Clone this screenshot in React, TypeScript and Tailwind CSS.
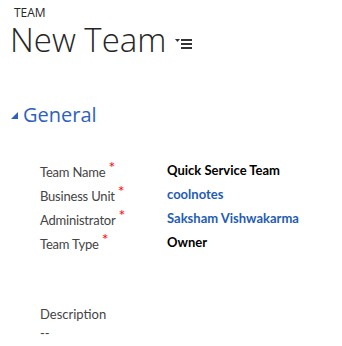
import React from "react"

const rows = [
  { label: "Team Name", value: "Quick Service Team", link: false },
  { label: "Business Unit", value: "coolnotes", link: true },
  { label: "Administrator", value: "Saksham Vishwakarma", link: true },
  { label: "Team Type", value: "Owner", link: false },
]

export default function App() {
  return (
    <div className="w-[342px] h-[346px] bg-white overflow-hidden font-['Segoe_UI','Open_Sans',sans-serif]">
      <div className="pl-[14px] pt-[7px] text-[12px] leading-[12px] text-[#262626]">TEAM</div>
      <div className="flex items-center pl-[10px] mt-[4px]">
        <h1 className="text-[33px] leading-[34px] font-light text-[#262626]">New Team</h1>
        <svg width="18" height="12" viewBox="0 0 18 12" className="ml-[9px] mt-[8px]">
          <path d="M0 1h5l-2.5 3z" fill="#333" />
          <rect x="6" y="1" width="11" height="2" fill="#333" />
          <rect x="6" y="5" width="11" height="2" fill="#333" />
          <rect x="6" y="9" width="11" height="2" fill="#333" />
        </svg>
      </div>

      <div className="flex items-center pl-[11px] mt-[45px]">
        <svg width="7" height="7" viewBox="0 0 7 7">
          <path d="M7 0v7H0z" fill="#2e5fc1" />
        </svg>
        <h2 className="ml-[5px] text-[20px] leading-[26px] text-[#2e5fc1]">General</h2>
      </div>

      <div className="mt-[34px] pl-[40px] flex flex-col gap-[6px] font-['Lato',sans-serif]">
        {rows.map(r => (
          <div key={r.label} className="flex items-center h-[18px] text-[13px]">
            <div className="w-[127px] text-[#444] tracking-[-0.2px]">
              {r.label}
              <span className="text-[#f00] text-[16px] ml-[3px] relative top-[-4px]">*</span>
            </div>
            <div className={`font-bold ${r.link ? "text-[#1f5cb5]" : "text-black"}`}>{r.value}</div>
          </div>
        ))}
      </div>

      <div className="font-['Lato',sans-serif]">
        <div className="mt-[53px] pl-[40px] text-[13px] text-[#444]">Description</div>
        <div className="pl-[40px] text-[13px] text-[#444] leading-[16px]">--</div>
      </div>
    </div>
  )
}
